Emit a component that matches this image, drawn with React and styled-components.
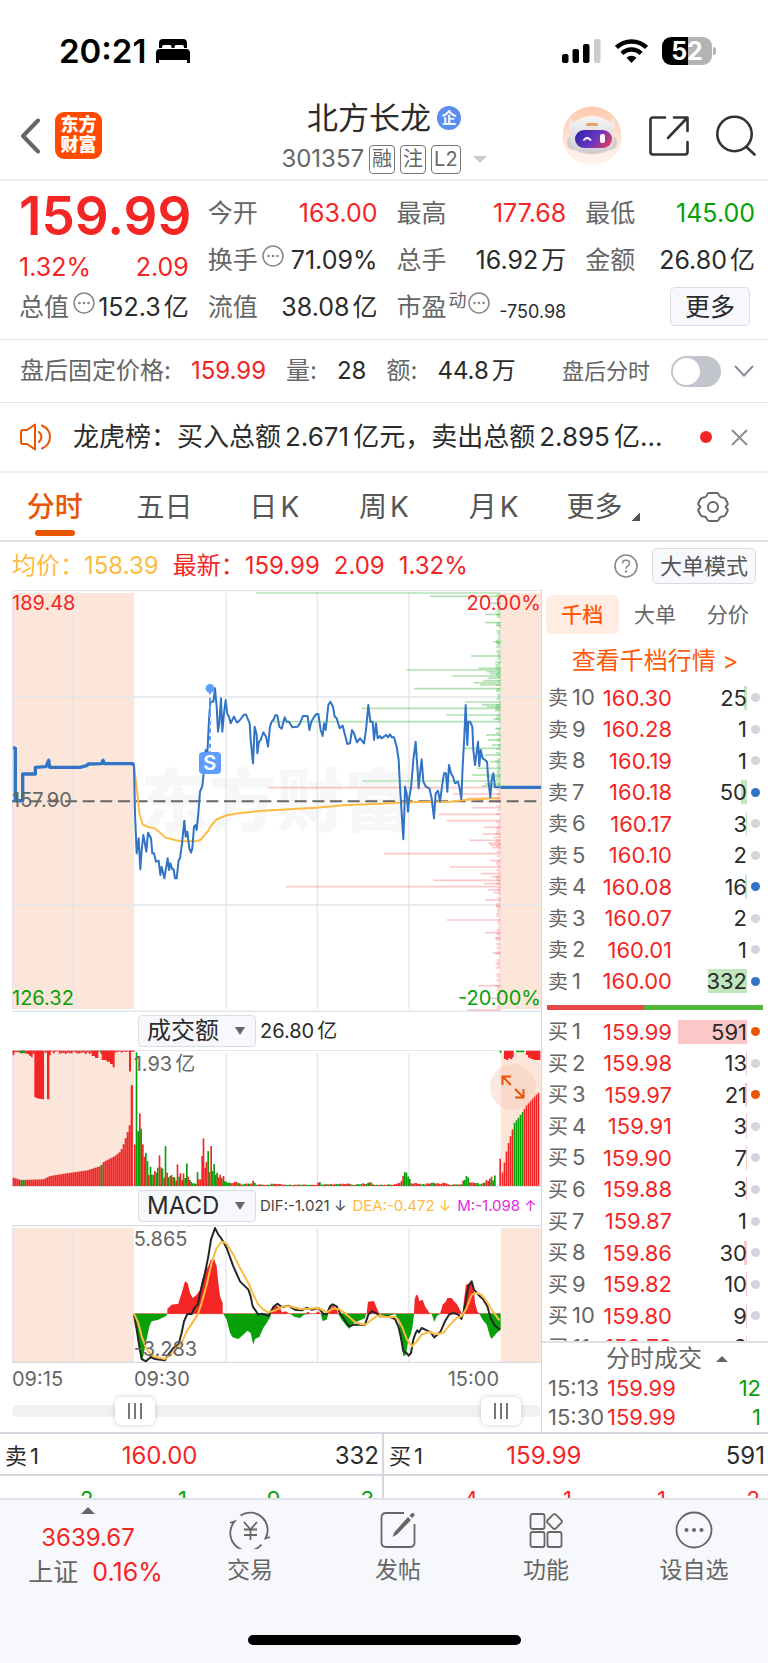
import React from "react"
import styled, { createGlobalStyle } from "styled-components"

const RED = "#f42525"
const GREEN = "#08a008"
const ORANGE = "#ea5504"
const BLUE = "#3173c4"
const LINE = "#e3e5ea"
const PEACH = "#fce6da"

const GlobalStyle = createGlobalStyle`
  * {
    box-sizing: border-box;
  }

  body {
    margin: 0;
    background: white;
    color: #2b2b2b;
    font-family: Inter, "Noto Sans CJK SC", sans-serif;
    font-size: 24px;
    line-height: 32px;
  }

  button,
  select,
  input {
    font: inherit;
    color: inherit;
    margin: 0;
  }

  button {
    padding: 0;
    border: 0;
    background: none;
    cursor: pointer;
  }

  a {
    color: inherit;
    text-decoration: none;
  }

  h1,
  p,
  dl,
  dd {
    margin: 0;
  }

  svg {
    display: block;
  }
`

/* ---------- data ---------- */

const sells = [
  ["卖10", "160.30", 25, 3, "idle"],
  ["卖9", "160.28", 1, 0, "idle"],
  ["卖8", "160.19", 1, 0, "idle"],
  ["卖7", "160.18", 50, 6, "sell"],
  ["卖6", "160.17", 3, 1, "idle"],
  ["卖5", "160.10", 2, 0, "idle"],
  ["卖4", "160.08", 16, 2, "sell"],
  ["卖3", "160.07", 2, 0, "idle"],
  ["卖2", "160.01", 1, 0, "idle"],
  ["卖1", "160.00", 332, 39, "sell"],
]

const buys = [
  ["买1", "159.99", 591, 69, "buy"],
  ["买2", "159.98", 13, 1, "idle"],
  ["买3", "159.97", 21, 2, "buy"],
  ["买4", "159.91", 3, 1, "idle"],
  ["买5", "159.90", 7, 1, "idle"],
  ["买6", "159.88", 3, 1, "idle"],
  ["买7", "159.87", 1, 0, "idle"],
  ["买8", "159.86", 30, 3, "idle"],
  ["买9", "159.82", 10, 1, "idle"],
  ["买10", "159.80", 9, 1, "idle"],
  ["买11", "159.78", 8, 1, "idle"],
]

// afternoon series are stored relative to this x
const NOON = 1140
const late = text =>
  text
    .split(" ")
    .map(pair => {
      const [x, y] = pair.split(",")
      return `${Number(x) + NOON},${y}`
    })
    .join(" ")

const preOpen =
  "39,503 46,505 46,662 68,662 68,582 106,582 106,562 138,560 146,541 149,562 240,562 262,556 264,552 305,551 309,541 313,551 398,551 402,556"

const price =
  "402,556 405,700 410,820 416,775 421,868 425,810 430,765 439,815 444,758 453,775 457,820 462,820 468,845 476,842 481,885 485,860 493,895 503,835 507,870 511,850 517,868 521,868 525,895 530,895 536,840 540,835 546,790 553,722 557,770 562,755 568,805 573,818 577,805 582,740 587,735 590,750 595,700 600,635 607,618 612,570 617,510 622,520 627,420 631,365 640,365 645,325 650,380 654,455 658,430 663,355 667,455 672,400 677,360 682,402 687,410 692,430 702,410 711,428 720,420 732,404 738,404 749,430 752,480 759,550 764,440 770,465 772,520 777,485 782,480 790,457 798,470 804,500 810,440 815,425 820,420 826,406 832,406 838,440 845,446 854,412 860,425 867,425 877,442 893,440 900,430 909,408 923,408 928,450 934,425 944,408 950,402 955,402 962,450 968,468 972,430 977,450 985,375 991,365 999,380 1004,410 1010,415 1019,445 1028,437 1042,492 1050,490 1056,450 1062,460 1071,487 1080,475 1092,490 1098,450 1105,375 1111,425 1118,425 1122,480 1128,430 1133,475 1140,468 " +
  late(
    "5,475 18,465 24,472 30,463 36,472 42,472 50,500 56,540 60,620 65,700 70,778 73,700 75,620 80,640 84,695 88,650 93,625 100,540 107,485 112,560 116,625 120,580 125,538 130,605 138,620 148,625 155,655 162,715 167,640 174,632 180,665 186,620 192,580 198,580 202,635 207,555 213,580 219,590 225,610 234,605 240,630 244,657 248,560 253,470 257,375 262,495 265,425 270,425 277,440 280,510 285,555 294,485 298,558 302,510 308,535 315,540 321,545 325,600 331,652 335,600 340,580 345,622 362,622"
  )

const average =
  "402,556 412,640 418,700 428,733 440,740 465,745 480,758 497,773 540,784 590,783 601,780 625,752 632,738 650,718 680,706 720,699 780,693 880,687 950,683 1030,676 1140,671 1215,667 1350,665 1395,660 1495,654"

// [y, left end] of each price level in the order depth
const askDepth = [
  [39, -372], [49, 150], [70, 330], [103, 315], [128, 315], [137, 350],
  [185, 340], [189, 350], [228, 273], [247, 345], [265, 295], [270, 80],
  [275, 320], [281, 330], [288, 217], [294, 325], [302, 310], [308, 282],
  [314, 300], [326, 102], [366, 255], [374, 305], [380, 320], [385, -55],
  [392, 345], [405, 198], [417, 340], [425, -325], [445, 345], [465, 318],
  [480, 325], [495, 335], [505, 252], [525, 315], [545, 330], [565, 290],
  [585, 275], [590, 320], [603, -55], [612, 315], [618, 305],
]

const bidDepth = [
  [623, -335], [642, 220], [655, 260], [665, 320], [683, 275], [703, 175],
  [722, 200], [742, 312], [762, 308], [772, 340], [781, 268], [790, 325],
  [795, 330], [803, 335], [821, 13], [842, 330], [861, 210], [881, 302],
  [890, 335], [901, 160], [911, 312], [920, -282], [930, 325], [938, 340],
  [960, 315], [980, 348], [1020, 200], [1058, 315], [1075, 345],
  [1119, 338], [1217, 295], [1255, 330], [1290, 262],
]

// [x, height, is it a rising bar]
const openVolume = [
  [404, 125, 1], [409, 402, 0], [414, 165, 0], [419, 218, 1], [423, 172, 0],
  [428, 125, 1], [433, 88, 1], [437, 100, 0], [442, 75, 0], [446, 33, 1],
  [451, 58, 0], [455, 34, 0], [460, 34, 0], [464, 45, 1], [469, 40, 0],
  [473, 55, 0], [478, 92, 1], [483, 56, 1], [487, 52, 0], [492, 25, 1],
  [496, 120, 0], [501, 40, 1], [505, 26, 0], [510, 30, 1], [514, 33, 0],
  [519, 27, 1], [523, 26, 0], [528, 16, 1], [532, 65, 1], [537, 28, 0],
  [541, 38, 1], [546, 18, 1], [550, 38, 1], [555, 24, 0], [560, 68, 0],
  [564, 28, 1], [569, 18, 0], [573, 12, 1], [578, 8, 0], [583, 8, 0],
  [587, 6, 1], [592, 42, 0], [596, 20, 1], [601, 20, 1], [606, 90, 1],
  [610, 143, 1], [615, 55, 1], [619, 72, 1], [624, 105, 0], [628, 42, 1],
  [633, 120, 1], [637, 45, 0], [642, 66, 0], [647, 34, 1], [651, 40, 0],
  [656, 26, 1], [660, 34, 1], [665, 24, 0], [670, 30, 1], [674, 14, 0],
]

const quietVolume = [
  [680, 15], [695, 12], [712, 15], [722, 5], [752, 8], [760, 24], [768, 7],
  [795, 4], [833, 9], [850, 4], [950, 4], [956, 15], [966, 5], [1050, 9],
  [1060, 4], [1112, 11], [1122, 4], [1180, 5], [1192, 11],
]

const lateVolume = [
  [62, 14], [68, 34], [77, 50], [87, 24], [93, 10], [130, 6], [165, 12],
  [178, 6], [190, 13], [205, 5], [245, 5], [254, 28], [262, 36], [270, 16],
  [290, 9], [305, 6], [322, 20], [333, 40], [340, 22], [347, 44], [349, 0],
].map(([x, h]) => [x + NOON, h])

const volumeCurve = quietVolume.concat(lateVolume)

const preVolume = [
  [38, 26], [62, 18], [130, 20], [150, 30], [200, 38], [262, 47], [302, 60],
  [312, 73], [345, 90], [362, 104], [372, 128], [384, 165], [391, 190],
  [395, 300],
]

const postVolume = [
  [367, 36], [375, 75], [382, 115], [392, 150], [404, 190], [418, 208],
  [430, 225], [440, 243], [455, 260], [470, 275], [482, 286],
].map(([x, h]) => [x + NOON, h])

const valueAt = (curve, x) => {
  const next = curve.findIndex(([cx]) => cx >= x)
  if (next <= 0) return curve[next === 0 ? 0 : curve.length - 1][1]
  const [x0, h0] = curve[next - 1]
  const [x1, h1] = curve[next]
  return h0 + ((h1 - h0) * (x - x0)) / (x1 - x0)
}

const range = (from, to, step) => {
  const list = []
  for (let x = from; x <= to; x += step) list.push(x)
  return list
}

const noise = n => Math.abs(Math.sin(n * 12.9898) * 43758.5453) % 1

const macdUp = [
  "502,942 502,928 515,915 535,912 545,880 555,845 563,850 570,880 578,895 590,885 600,870 605,845 615,815 625,800 632,780 642,778 650,800 655,850 660,890 668,910 668,942",
  "812,942 820,925 830,918 840,925 846,938 858,935 868,942",
  "915,942 924,936 932,942",
  "945,942 955,935 962,942",
  "985,942 990,925 1000,918 1010,928 1014,942",
  "1100,942 1104,906 1122,904 1128,920 1138,942",
  late("102,942 104,900 108,885 114,888 118,905 128,900 135,920 150,942"),
  late(
    "180,942 188,915 198,905 202,895 215,895 222,905 230,912 240,930 245,942"
  ),
  late("248,942 252,900 258,855 270,850 280,855 285,910 292,935 298,942"),
]

const macdDown = [
  "402,942 410,980 417,1040 423,1080 430,1070 437,1030 442,1010 448,980 455,965 475,960 500,948 500,942",
  "670,942 680,960 690,1000 698,1013 715,1018 730,1005 742,993 752,1000 760,1035 765,1018 778,1012 790,985 800,970 812,950 812,942",
  "870,942 885,952 900,955 912,945 930,942",
  "962,942 968,964 980,960 985,942",
  "1014,942 1025,960 1040,980 1048,987 1062,970 1095,955 1098,942",
  "1138,942 1150,948 1170,948 1186,942",
  late(
    "46,942 55,965 62,1000 70,1070 78,1065 85,1020 92,1005 98,980 102,942"
  ),
  late("155,942 163,966 170,950 180,942"),
  late("298,942 308,960 320,975 330,1010 335,1018 350,1000 362,990 362,942"),
]

const dif =
  "402,945 410,990 418,1040 425,1078 438,1085 452,1072 465,1078 494,1082 505,1065 520,1045 535,1035 545,1000 552,965 562,943 575,943 583,925 593,915 603,870 615,820 625,770 633,720 645,685 655,705 663,715 672,730 680,745 700,800 720,845 745,870 752,890 758,920 775,945 785,942 806,948 820,922 832,912 845,922 865,918 885,930 905,932 920,925 935,930 955,925 970,942 980,944 990,920 998,914 1010,920 1020,940 1040,970 1048,980 1062,975 1095,975 1105,945 1115,935 1128,940 1139,948 " +
  late(
    "0,950 25,950 45,958 55,980 62,1010 70,1055 78,1058 86,1068 93,1060 100,1020 107,1000 112,992 117,998 125,985 140,992 152,998 163,1013 172,1005 182,995 195,965 207,945 220,940 235,945 244,958 250,940 258,900 265,860 275,845 282,870 300,890 310,900 322,920 332,955 345,978 360,990"
  )

const dea =
  "402,942 415,970 425,1010 440,1050 460,1070 494,1078 510,1068 530,1045 545,1030 560,995 580,965 593,945 605,910 620,855 635,790 650,745 665,726 680,732 700,765 720,805 745,850 760,885 775,915 790,930 806,938 825,932 850,920 870,920 900,928 930,927 955,925 980,938 1000,926 1020,930 1040,945 1065,967 1085,974 1098,974 1115,960 1130,950 1139,947 " +
  late(
    "0,948 20,952 45,952 55,960 68,985 80,1018 95,1040 108,1028 125,1005 145,997 170,1003 190,1000 210,975 230,955 245,950 260,925 275,885 290,880 305,885 320,905 335,930 358,962"
  )

/* ---------- status bar and header ---------- */

const Screen = styled.div`
  min-width: 600px;
`

// small space between digits and a Chinese character
const Spaced = styled.span`
  margin-left: 3px;
`

const StatusBar = styled.div`
  height: 92px;
  padding: 10px 52px 0 59px;
  display: flex;
  align-items: center;
  justify-content: space-between;
  color: black;
`

const Cluster = styled.div`
  display: flex;
  align-items: center;
  gap: ${p => p.$gap}px;
`

const Clock = styled.span`
  font-size: 33px;
  font-weight: 600;
`

const Battery = styled.span`
  display: flex;
  align-items: center;

  span {
    width: 50px;
    height: 28px;
    border-radius: 9px;
    background: linear-gradient(to right, black 52%, #b3b3b3 52%);
    color: white;
    font-size: 25px;
    font-weight: 700;
    line-height: 28px;
    text-align: center;
  }

  &::after {
    content: "";
    width: 3px;
    height: 8px;
    margin-left: 1px;
    border-radius: 0 3px 3px 0;
    background: #b3b3b3;
  }
`

const Header = styled.header`
  height: 89px;
  padding: 0 12px;
  display: grid;
  grid-template-columns: 1fr auto 1fr;
  align-items: center;
  border-bottom: 2px solid #eeeeee;
`

const HeaderLeft = styled(Cluster)`
  padding-left: 8px;
`

const HeaderTitle = styled.div`
  padding-top: 5px;
`

const HeaderActions = styled.div`
  display: flex;
  align-items: center;
  justify-content: flex-end;
  gap: 27px;
`

const AppLogo = styled.a`
  width: 47px;
  height: 47px;
  padding-top: 3px;
  border-radius: 9px;
  background: #ff4a00;
  color: white;
  font-size: 18px;
  font-weight: 900;
  line-height: 20px;
  text-align: center;
`

const Title = styled.h1`
  display: flex;
  align-items: center;
  justify-content: center;
  gap: 6px;
  font-size: 31px;
  font-weight: 400;
  line-height: 42px;
`

const Badge = styled.span`
  width: 24px;
  height: 24px;
  border-radius: 50%;
  background: #5b8def;
  color: white;
  font-size: 15px;
  font-weight: 700;
  line-height: 24px;
  text-align: center;
`

const Code = styled.div`
  display: flex;
  align-items: center;
  justify-content: center;
  gap: 5px;
  height: 40px;
  color: #666666;
  font-size: 24px;
`

const Tag = styled.span`
  height: 29px;
  padding: 0 2px;
  border: 1px solid #777777;
  border-radius: 4px;
  font-size: 20px;
  line-height: 27px;
`

const Caret = styled.span`
  width: 0;
  height: 0;
  margin-left: ${p => p.$space || 0}px;
  border: ${p => p.$size || 7}px solid transparent;
  ${p =>
    p.$up
      ? `border-top: 0; border-bottom-color: ${p.$color || "#666666"};`
      : `border-bottom: 0; border-top-color: ${p.$color || "#666666"};`}
`

/* ---------- quote ---------- */

const Quote = styled.section`
  display: grid;
  grid-template-columns: repeat(4, minmax(0, 1fr));
  column-gap: 19px;
  height: 159px;
  padding: 8px 13px 0 19px;
  border-bottom: 1px solid #e8e8e8;
`

const QuoteList = styled.dl`
  display: flex;
  flex-direction: column;
`

const QuoteRow = styled.div`
  display: flex;
  align-items: center;
  justify-content: space-between;
  height: 47px;
  white-space: nowrap;

  dt {
    display: flex;
    align-items: center;
    color: #666666;
    font-size: 25px;
  }

  dd {
    color: ${p => p.$color || "#2b2b2b"};
    font-size: ${p => (p.$small ? 18 : 25)}px;
    padding-top: ${p => (p.$small ? 10 : 0)}px;
  }

  svg {
    margin: 0 0 8px 4px;
  }

  sup {
    font-size: 18px;
    line-height: 24px;
    padding: 0 0 12px 2px;
  }

  sup + svg {
    margin-left: 1px;
  }
`

const LastPrice = styled.p`
  height: 55px;
  color: ${RED};
  font-size: 53px;
  font-weight: 600;
  line-height: 55px;
`

const Change = styled.p`
  display: flex;
  align-items: center;
  justify-content: space-between;
  height: 39px;
  padding-top: 6px;
  color: ${RED};
  font-size: 25px;
`

const OutlineButton = styled.button`
  height: ${p => p.$height}px;
  padding: 0 ${p => p.$pad}px;
  border: 1px solid #d9dce3;
  border-radius: 5px;
  background: #f7f8fb;
  color: ${p => p.$color || "#2b2b2b"};
  font-size: ${p => p.$size}px;
  line-height: 32px;
  white-space: nowrap;
`

const MoreRow = styled.div`
  display: flex;
  justify-content: flex-end;
  align-items: center;
  height: 47px;
  padding-right: 5px;
`

const AfterHours = styled.section`
  display: flex;
  align-items: center;
  height: 63px;
  padding: 0 14px 0 20px;
  border-bottom: 1px solid #e3e3e3;
  color: #666666;
  white-space: nowrap;
`

const Figure = styled.span`
  margin: 0 ${p => (p.$last ? 0 : 20)}px 0 20px;
  color: ${p => p.$color || "#2b2b2b"};
`

const SwitchLabel = styled.label`
  display: flex;
  align-items: center;
  gap: 21px;
  margin: 0 13px 0 auto;
  font-size: 22px;
`

const Switch = styled.input`
  appearance: none;
  width: 50px;
  height: 31px;
  border-radius: 16px;
  background: #c2c5cb;

  &::before {
    content: "";
    display: block;
    width: 27px;
    height: 27px;
    margin: 2px;
    border-radius: 50%;
    background: white;
  }

  &:checked {
    background: ${ORANGE};
  }

  &:checked::before {
    margin-left: 21px;
  }
`

const News = styled.section`
  display: flex;
  align-items: center;
  height: 70px;
  padding: 0 20px;
  border-bottom: 2px solid #eeeeee;
`

const NewsText = styled.a`
  flex: 1;
  min-width: 0;
  margin: 0 32px 0 21px;
  overflow: hidden;
  font-size: 26px;
  white-space: nowrap;

  span {
    margin: 0 4px;
  }
`

const RedDot = styled.span`
  width: 12px;
  height: 12px;
  margin-right: 19px;
  border-radius: 50%;
  background: ${RED};
`

/* ---------- chart tabs ---------- */

const Tabs = styled.nav`
  display: grid;
  grid-template-columns: repeat(7, 1fr);
  height: 69px;
  border-bottom: 2px solid #dfe1e7;
`

const Tab = styled.button`
  display: flex;
  align-items: center;
  justify-content: center;
  position: relative;
  color: ${p => (p.$active ? ORANGE : "#555555")};
  font-size: 28px;
  font-weight: ${p => (p.$active ? 500 : 400)};

  &::after {
    content: "";
    display: ${p => (p.$active ? "block" : "none")};
    position: absolute;
    bottom: 4px;
    width: 40px;
    height: 6px;
    border-radius: 3px;
    background: ${ORANGE};
  }
`

const Corner = styled.span`
  width: 8px;
  height: 8px;
  margin: 20px 0 0 10px;
  background: linear-gradient(135deg, transparent 50%, #555555 50%);
`

const Summary = styled.div`
  display: flex;
  align-items: center;
  gap: 14px;
  height: 48px;
  padding: 0 12px;
  color: ${RED};
  white-space: nowrap;

  svg {
    margin-left: auto;
  }
`

const Average = styled.span`
  color: #fdbb42;
`

const Workspace = styled.main`
  display: grid;
  grid-template-columns: minmax(0, 1fr) 226px;
  padding-left: 12px;
`

const Charts = styled.section`
  border-right: 1px solid #d5d8e0;
`

const Panel = styled.div`
  position: relative;
  height: ${p => p.$height}px;

  > svg {
    position: relative;
    width: 100%;
    height: 100%;
  }
`

const Watermark = styled.span`
  position: absolute;
  top: 50%;
  left: 50%;
  transform: translate(-50%, -50%);
  color: #f7f7f8;
  font-size: 68px;
  font-weight: 900;
  line-height: 72px;
  white-space: nowrap;
`

const AxisLabel = styled.span`
  position: absolute;
  top: ${p => p.$top};
  bottom: ${p => p.$bottom};
  left: ${p => p.$left};
  right: ${p => p.$right};
  color: ${p => p.$color || "#666666"};
  font-size: 20px;
  line-height: 24px;
`

const SellMark = styled.span`
  position: absolute;
  top: 162px;
  left: calc(37% - 9px);
  width: 22px;
  height: 22px;
  border-radius: 4px;
  background: #5e9dff;
  color: white;
  font-size: 20px;
  font-weight: 600;
  line-height: 22px;
  text-align: center;
`

const ExpandButton = styled.button`
  position: absolute;
  top: 14px;
  right: 5px;
  display: flex;
  align-items: center;
  justify-content: center;
  width: 46px;
  height: 46px;
  border-radius: 50%;
  background: rgba(247, 205, 182, 0.45);
`

const IndicatorBar = styled.div`
  display: flex;
  align-items: center;
  gap: 4px;
  height: 38px;
  padding-left: 126px;
  font-size: 20px;
  white-space: nowrap;
`

const SelectBox = styled.label`
  display: grid;
  align-items: center;

  &::after {
    content: "";
    grid-area: 1 / 1;
    justify-self: end;
    margin-right: 11px;
    border: 5px solid transparent;
    border-top: 8px solid #666666;
    border-bottom: 0;
    pointer-events: none;
  }
`

const Select = styled.select`
  grid-area: 1 / 1;
  appearance: none;
  width: 118px;
  height: 32px;
  padding: 0 8px;
  border: 1px solid #d9dce3;
  border-radius: 4px;
  background: #f7f8fb;
  font-size: 24px;
  line-height: 28px;
`

const Reading = styled.span`
  margin-right: 2px;
  color: ${p => p.$color};
  font-size: 15px;
`

const TimeAxis = styled.div`
  display: grid;
  grid-template-columns: 122px 1fr auto;
  height: 32px;
  padding-right: 42px;
  color: #666666;
  font-size: 20px;
`

const RangeBar = styled.div`
  display: grid;
  align-items: center;
  height: 32px;

  &::before {
    content: "";
    grid-area: 1 / 1;
    height: 12px;
    border-radius: 6px;
    background: #f1f1f4;
  }
`

const RangeInput = styled.input`
  grid-area: 1 / 1;
  appearance: none;
  width: 100%;
  height: 28px;
  background: transparent;
  pointer-events: none;

  &::-webkit-slider-thumb {
    appearance: none;
    width: 40px;
    height: 28px;
    border-radius: 6px;
    background: repeating-linear-gradient(
          to right,
          #777777 0 2px,
          transparent 2px 6px
        )
        center / 14px 16px no-repeat,
      white;
    box-shadow: 0 0 5px rgba(0, 0, 0, 0.2);
    pointer-events: auto;
  }
`

/* ---------- order book ---------- */

const Book = styled.aside`
  display: flex;
  flex-direction: column;
`

const BookTabs = styled.div`
  display: grid;
  grid-template-columns: repeat(3, 1fr);
  height: 49px;
  padding: 5px 4px;
`

const BookTab = styled.button`
  border-radius: 6px;
  background: ${p => (p.$active ? "#ffece2" : "none")};
  color: ${p => (p.$active ? "#ff5a0a" : "#666666")};
  font-size: 21px;
  font-weight: ${p => (p.$active ? 500 : 400)};
`

const DepthLink = styled.a`
  height: 43px;
  padding-top: 6px;
  color: #ff5a0a;
  text-align: center;
`

const BookTable = styled.table`
  display: block;
  height: ${p => p.$height}px;
  overflow: hidden;

  tbody {
    display: grid;
    grid-auto-rows: 1fr;
    height: ${p => p.$rows}px;
  }
`

const BookRow = styled.tr`
  display: grid;
  grid-template-columns: 52px 72px 1fr 9px;
  align-items: center;
  padding: 0 8px 0 6px;
  font-size: 22px;

  th,
  td {
    padding: 0;
    font-weight: 400;
    text-align: right;
    line-height: 24px;
    white-space: nowrap;
  }

  th {
    color: #666666;
    font-size: 20px;
    text-align: left;
  }

  th span {
    margin-left: 4px;
    font-size: 22px;
  }
`

const PriceCell = styled.td`
  color: ${RED};
`

const SizeCell = styled.td`
  margin-right: 4px;
  background: linear-gradient(
      ${p => (p.$buy ? "#fbc8c8, #fbc8c8" : "#bfe6bf, #bfe6bf")}
    )
    right / ${p => p.$bar}px 100% no-repeat;
`

const Dot = styled.td`
  width: 9px;
  height: 9px;
  border-radius: 50%;
  background: ${p =>
    ({ idle: "#d2d5dc", sell: BLUE, buy: ORANGE }[p.$kind])};
`

const Balance = styled.div`
  height: 5px;
  margin: 8px 5px 6px;
  background: linear-gradient(
    110deg,
    #e64848 45%,
    #52b73c 45%
  );
`

const Trades = styled.table`
  display: block;
  margin-top: auto;
  border-top: 2px solid #dfe1e7;
  font-size: 22px;

  caption {
    display: flex;
    align-items: center;
    justify-content: center;
    gap: 14px;
    height: 31px;
    padding-left: 24px;
    color: #666666;
    font-size: 24px;
  }

  tbody {
    display: block;
  }

  tr {
    display: grid;
    grid-template-columns: 59px 1fr auto;
    height: 29px;
    padding: 0 7px 0 6px;
    line-height: 29px;
    white-space: nowrap;
  }

  td {
    padding: 0;
    color: ${RED};
  }

  td:first-child {
    color: #666666;
  }

  td:last-child {
    color: ${GREEN};
  }
`

/* ---------- bottom ---------- */

const BestQuotes = styled.div`
  display: grid;
  grid-template-columns: 1fr 1fr;
  border-top: 2px solid #d5d8e0;
`

const Side = styled.div`
  border-right: ${p => (p.$last ? 0 : 2)}px solid #d5d8e0;
`

const BestRow = styled.div`
  display: grid;
  grid-template-columns: 1fr 1fr 1fr;
  align-items: center;
  height: 42px;
  padding: 4px 3px 0 5px;
  border-bottom: 2px solid #d5d8e0;

  > :nth-child(1) {
    font-size: 22px;
  }

  > :nth-child(2) {
    margin-left: -8px;
    color: ${RED};
  }

  > :nth-child(3) {
    text-align: right;
  }
`

const QueueRow = styled.div`
  display: grid;
  grid-template-columns: repeat(4, 1fr);
  height: 22px;
  padding: 10px 8px 0 0;
  overflow: hidden;
  color: ${p => p.$color};
  font-size: 22px;
  line-height: 26px;
  text-align: right;
`

const BottomNav = styled.nav`
  display: grid;
  grid-template-columns: 176px repeat(4, 1fr);
  height: 137px;
  border-top: 2px solid #dfe1e7;
  background: #f7f8fb;
`

const NavItem = styled.a`
  display: flex;
  flex-direction: column;
  align-items: center;
  padding-top: 11px;
  gap: 5px;
  color: #666666;
  font-size: 23px;
`

const IndexItem = styled.a`
  display: flex;
  flex-direction: column;
  align-items: center;
  padding-top: 7px;
  color: ${RED};
  gap: 2px;

  strong {
    margin-top: 6px;
    font-weight: 400;
  }
`

const IndexChange = styled.span`
  display: flex;
  gap: 14px;
  padding-left: 15px;
  font-size: 25px;
`

const IndexName = styled.span`
  color: #666666;
`

const HomeArea = styled.div`
  height: 28px;
  background: #f7f8fb;

  &::before {
    content: "";
    display: block;
    width: 273px;
    height: 10px;
    margin: 0 auto;
    border-radius: 5px;
    background: black;
  }
`

/* ---------- icons ---------- */

const BedIcon = () => (
  <svg width="34" height="24" viewBox="0 0 34 24">
    <path d="M3 9V4q0-4 4-4h20q4 0 4 4v5h-3V8q0-2-2-2h-6q-1.500 0-1.500 2V9h-3V8q0-2-1.500-2H8Q6 6 6 8v1zM0 24V14q0-4 4-4h26q4 0 4 4v10h-3v-3H3v3z" />
  </svg>
)

const SignalIcon = () => (
  <svg width="39" height="24" viewBox="0 0 39 24">
    <rect y="15" width="6.500" height="9" rx="2" />
    <rect x="10.500" y="10" width="6.500" height="14" rx="2" />
    <rect x="21" y="5" width="6.500" height="19" rx="2" />
    <rect x="32" width="6.500" height="24" rx="2" fill="#cccccc" />
  </svg>
)

const WifiIcon = () => (
  <svg width="33" height="24" viewBox="0 0 33 24">
    <g fill="none" stroke="black" strokeWidth="4.500">
      <path d="M1.500 8.500a21.500 21.500 0 0 1 30 0" />
      <path d="M7 14.500a13.500 13.500 0 0 1 19 0" />
    </g>
    <path d="M16.500 24l-5-5.200a7.200 7.200 0 0 1 10 0z" />
  </svg>
)

const BackIcon = () => (
  <svg width="20" height="36" viewBox="0 0 20 36">
    <path
      d="M18 2.500L3 18l15 15.500"
      fill="none"
      stroke="#666666"
      strokeWidth="4"
      strokeLinecap="round"
      strokeLinejoin="round"
    />
  </svg>
)

const RobotIcon = () => (
  <svg width="60" height="60" viewBox="0 0 60 60">
    <defs>
      <linearGradient id="halo" x2="0" y2="1">
        <stop offset="0" stopColor="#ffc9ac" />
        <stop offset="1" stopColor="#fff7f2" />
      </linearGradient>
      <linearGradient id="visor" y1="0.300" y2="0.700">
        <stop offset="0" stopColor="#3327a5" />
        <stop offset="0.550" stopColor="#6c35c4" />
        <stop offset="1" stopColor="#e23a5e" />
      </linearGradient>
      <linearGradient id="shell" x2="0" y2="1">
        <stop offset="0" stopColor="#f7f5f5" />
        <stop offset="1" stopColor="#cfcbd0" />
      </linearGradient>
    </defs>
    <circle cx="30" cy="30" r="29.500" fill="url(#halo)" />
    <path
      d="M8 11q-2 8 1 14L20 15Q11 18 8 11zM52 11q2 8-1 14L40 15q9 3 12-4z"
      fill="#efe9e8"
    />
    <rect x="5" y="29" width="50" height="15" rx="7" fill="#d0cbcf" />
    <path
      d="M30 10q19 0 22 18 2 13-7 17-6 3-15 3t-15-3q-9-4-7-17Q11 10 30 10z"
      fill="url(#shell)"
    />
    <rect x="24" y="17" width="12" height="3" rx="1.500" fill="#e9a267" />
    <rect x="13" y="24" width="37" height="18" rx="9" fill="url(#visor)" />
    <path
      d="M22 34q3-4 6.500 0"
      fill="none"
      stroke="white"
      strokeWidth="1.800"
      strokeLinecap="round"
    />
    <rect x="38" y="28" width="5" height="9" rx="2" fill="white" />
  </svg>
)

const ShareIcon = () => (
  <svg width="40" height="40" viewBox="0 0 40 40">
    <g
      fill="none"
      stroke="#333333"
      strokeWidth="2.600"
      strokeLinecap="round"
      strokeLinejoin="round"
    >
      <path d="M16 1.500H4Q1.500 1.500 1.500 4v32q0 2.500 2.500 2.500h32q2.500 0 2.500-2.500V26" />
      <path d="M25 1.500h13.500V15M38 2L19 22" />
    </g>
  </svg>
)

const SearchIcon = () => (
  <svg width="40" height="41" viewBox="0 0 40 41">
    <g fill="none" stroke="#333333" strokeWidth="2.600" strokeLinecap="round">
      <circle cx="18.500" cy="19" r="17.200" />
      <path d="M30.500 32l8 7.500" />
    </g>
  </svg>
)

const MoreDots = () => (
  <svg width="22" height="22" viewBox="0 0 22 22" fill="#888888">
    <circle cx="11" cy="11" r="10" fill="none" stroke="#888888" strokeWidth="1.500" />
    <circle cx="6.500" cy="11" r="1.300" />
    <circle cx="11" cy="11" r="1.300" />
    <circle cx="15.500" cy="11" r="1.300" />
  </svg>
)

const ChevronIcon = () => (
  <svg width="20" height="12" viewBox="0 0 20 12">
    <path d="M1 1l9 9.500L19 1" fill="none" stroke="#8a8d94" strokeWidth="2" />
  </svg>
)

const SpeakerIcon = () => (
  <svg width="32" height="28" viewBox="0 0 32 28">
    <g fill="none" stroke={ORANGE} strokeWidth="2" strokeLinejoin="round">
      <path d="M15 1.500v25l-8-5.500H3q-2 0-2-2V9q0-2 2-2h4z" />
      <path d="M19 9q5 5 0 10" strokeLinecap="round" />
      <path d="M22 2.500q8 3.500 8 11.500t-8 11.500" strokeLinecap="round" />
    </g>
  </svg>
)

const CloseIcon = () => (
  <svg width="17" height="17" viewBox="0 0 17 17">
    <path d="M1 1l15 15M16 1L1 16" stroke="#8a8d94" strokeWidth="2" />
  </svg>
)

const GearIcon = () => (
  <svg width="32" height="32" viewBox="0 0 32 32">
    <g fill="none" stroke="#666666" strokeWidth="2" strokeLinejoin="round">
      <path d="M12 2h8q1.500 0 2 2 1 2.500 3.500 2.500 2 0 3 1.500l2 4q.7 1.500-.8 2.700-2 1.300 0 2.600 1.500 1.200.8 2.700l-2 4q-1 1.500-3 1.500-2.500 0-3.500 2.500-.5 2-2 2h-8q-1.500 0-2-2-1-2.500-3.500-2.500-2 0-3-1.500l-2-4q-.7-1.500.8-2.700 2-1.300 0-2.600Q.8 13.500 1.500 12l2-4q1-1.500 3-1.500Q9 6.500 10 4q.5-2 2-2z" />
      <circle cx="16" cy="16" r="5" />
    </g>
  </svg>
)

const HelpIcon = () => (
  <svg width="24" height="24" viewBox="0 0 24 24">
    <g fill="none" stroke="#8a8a8a" strokeWidth="1.600">
      <circle cx="12" cy="12" r="11" />
      <path d="M8.500 9.500q0-3.300 3.500-3.300t3.500 3q0 1.800-1.800 2.900T12 14.800" />
    </g>
    <circle cx="12" cy="17.500" r="1.200" fill="#8a8a8a" />
  </svg>
)

const ExpandIcon = () => (
  <svg width="24" height="24" viewBox="0 0 24 24">
    <path
      d="M1.500 10V1.500H10M2 2l8 8M22.500 14v8.500H14M22 22l-8-8"
      fill="none"
      stroke={ORANGE}
      strokeWidth="2"
    />
  </svg>
)

const TradeIcon = () => (
  <svg width="42" height="38" viewBox="0 0 42 38">
    <g fill="none" stroke="#666666" strokeWidth="1.800">
      <path d="M11.500 4.500A17.500 17.500 0 0 1 36.500 27.500l4.500-1.500" />
      <path d="M32.500 33.500A17.500 17.500 0 0 1 5.500 10.500L1 12" />
      <path d="M15 11l6.500 7.500L28 11M21.500 18.500V29M15 18.500h13M15 24h13" />
    </g>
  </svg>
)

const PostIcon = () => (
  <svg width="36" height="38" viewBox="0 0 36 38">
    <path
      d="M24 2H6Q1.500 2 1.500 6.500v25Q1.500 36 6 36h24q4.500 0 4.500-4.500V13"
      fill="none"
      stroke="#666666"
      strokeWidth="1.800"
    />
    <path
      d="M28 6l3 3-14 14.500-4.500 2.500 2-5zM29.500 4.500L32 2q3-.5 2.500 2.500L32 7z"
      fill="#666666"
    />
  </svg>
)

const GridIcon = () => (
  <svg width="34" height="38" viewBox="0 0 34 38">
    <g fill="none" stroke="#666666" strokeWidth="1.800">
      <rect x="1.500" y="3" width="14" height="15" rx="2" />
      <rect x="1.500" y="21" width="14" height="15" rx="2" />
      <rect x="18.500" y="21" width="14" height="15" rx="2" />
      <rect x="19.700" y="4.700" width="11.600" height="11.600" rx="2" transform="rotate(45 25.500 10.500)" />
    </g>
  </svg>
)

const WatchIcon = () => (
  <svg width="38" height="38" viewBox="0 0 38 38" fill="#666666">
    <circle cx="19" cy="19" r="17.500" fill="none" stroke="#666666" strokeWidth="1.800" />
    <circle cx="11.500" cy="19" r="2" />
    <circle cx="19" cy="19" r="2" />
    <circle cx="26.500" cy="19" r="2" />
  </svg>
)

/* ---------- charts ---------- */

const Frame = ({ top, bottom }) => (
  <>
    <rect x="36" y={top} width="366" height={bottom - top} fill={PEACH} />
    <rect x="1502" y={top} width="121" height={bottom - top} fill={PEACH} />
    <g stroke={LINE} strokeWidth="4">
      {[219, 678, 952, 1227].map(x => (
        <line key={x} x1={x} x2={x} y1={top} y2={bottom} />
      ))}
      <line x1="37" x2="37" y1={top - 9} y2={bottom} />
    </g>
  </>
)

const PriceChart = () => (
  <svg viewBox="36 30 1587 1266" preserveAspectRatio="none">
    <Frame top={39} bottom={1287} />
    <path
      d="M36 31H1623M36 351H1623M36 975H1623M36 1294H1623"
      stroke={LINE}
      strokeWidth="5"
    />
    <g stroke="#3cb43c" strokeOpacity="0.400" strokeWidth="5">
      {askDepth.map(([y, x]) => (
        <line key={y} x1={x + NOON} x2="1502" y1={y} y2={y} />
      ))}
      {range(45, 620, 6).map(y => (
        <line key={y} x1={1500 - noise(y) * 14} x2="1502" y1={y} y2={y} />
      ))}
    </g>
    <g stroke="#f42525" strokeOpacity="0.250" strokeWidth="5">
      {bidDepth.map(([y, x]) => (
        <line key={y} x1={x + NOON} x2="1502" y1={y} y2={y} />
      ))}
      {range(630, 1285, 6).map(y => (
        <line key={y} x1={1500 - noise(y) * 14} x2="1502" y1={y} y2={y} />
      ))}
    </g>
    <line
      x1="36"
      x2="1623"
      y1="664"
      y2="664"
      stroke="#666666"
      strokeWidth="6"
      strokeDasharray="36 17"
    />
    <polyline points={average} fill="none" stroke="#fdbb42" strokeWidth="6" />
    <g fill="none" stroke={BLUE} strokeLinejoin="round">
      <polyline points={preOpen} strokeWidth="10" />
      <polyline points={price} strokeWidth="6" />
      <line x1="1502" x2="1623" y1="622" y2="622" strokeWidth="10" />
    </g>
    <line
      x1="630"
      x2="630"
      y1="330"
      y2="520"
      stroke="#5e9dff"
      strokeWidth="6"
      strokeDasharray="13 10"
    />
    <circle cx="630" cy="325" r="13" fill="#5e9dff" />
  </svg>
)

const VolumeChart = () => (
  <svg viewBox="36 150 1587 412" preserveAspectRatio="none">
    <Frame top={159} bottom={560} />
    <path d="M36 151H1623M36 561H1623" stroke={LINE} strokeWidth="4" />
    {range(38, 392, 6).map(x => {
      const h = valueAt(preVolume, x + 3)
      const down = (x > 60 && x < 74) || x === 302
      return (
        <rect key={x} x={x} y={559 - h} width="6" height={h} fill={down ? GREEN : RED} />
      )
    })}
    <rect x="393" y="255" width="5" height="304" fill={RED} />
    <g fill={RED}>
      {range(38, 398, 6).map(x => (
        <rect key={x} x={x} y="152" width="6" height={2 + noise(x) * 8} />
      ))}
      <path d="M38 152h5v14h-5zM80 152h18v20h-5v-5h-6v-5h-7zM103 152h29v146q-20-2-29-7zM141 152h7v146h-7zM148 152h4v14h-4zM275 152h20v22h-10v-6h-10zM305 152h39v50h-6v-10h-8v-7h-10v-5h-15zM387 152h6v63h-6z" />
    </g>
    <path d="M60 152h16v6H60zM300 152h5v6h-5z" fill={GREEN} />
    {openVolume.map(([x, h, up]) => (
      <rect key={x} x={x - 2} y={559 - h} width="5" height={h} fill={up ? RED : GREEN} />
    ))}
    {range(679, 1488, 5).map(x => {
      const h = Math.max(3, valueAt(volumeCurve, x) * (0.6 + noise(x) * 0.5))
      return (
        <rect
          key={x}
          x={x - 2}
          y={559 - h}
          width="5"
          height={h}
          fill={noise(x + 7) > 0.48 ? RED : GREEN}
        />
      )
    })}
    <rect x="1498" y="477" width="5" height="82" fill={RED} />
    {range(1505, 1618, 6).map(x => {
      const h = valueAt(postVolume, x + 3)
      return (
        <rect
          key={x}
          x={x}
          y={559 - h}
          width="5"
          height={h}
          fill={x > 1540 && x < 1570 ? GREEN : RED}
        />
      )
    })}
    <path
      d="M1512 152h29v20h-4v6h-6v-3h-6v5h-7v-3h-6zM1578 152h43v28h-20v-3h-9v-4h-8v-8h-6z"
      fill={RED}
    />
    <path d="M1499 152h6v6h-6zM1548 152h25v5h-25z" fill={GREEN} />
  </svg>
)

const MacdChart = () => (
  <svg viewBox="36 676 1587 414" preserveAspectRatio="none">
    <Frame top={685} bottom={1088} />
    <path d="M36 678H1623M36 1088H1623" stroke="#d9dce2" strokeWidth="4" />
    <line x1="402" x2="1502" y1="942" y2="942" stroke={RED} strokeWidth="2" />
    {macdUp.map(points => (
      <polygon key={points} points={points} fill={RED} />
    ))}
    {macdDown.map(points => (
      <polygon key={points} points={points} fill={GREEN} />
    ))}
    <g fill="none" strokeLinejoin="round" strokeWidth="6">
      <polyline points={dif} stroke="#262626" />
      <polyline points={dea} stroke="#fdbb42" />
    </g>
  </svg>
)

const BookRows = ({ rows, buy }) => (
  <tbody>
    {rows.map(([name, value, size, bar, kind]) => (
      <BookRow key={name}>
        <th scope="row">
          {name[0]}
          <span>{name.slice(1)}</span>
        </th>
        <PriceCell>{value}</PriceCell>
        <SizeCell $buy={buy} $bar={bar}>
          {size}
        </SizeCell>
        <Dot $kind={kind} />
      </BookRow>
    ))}
  </tbody>
)

const App = () => (
  <>
    <GlobalStyle />
    <Screen>
      <StatusBar>
        <Cluster $gap={10}>
          <Clock>20:21</Clock>
          <BedIcon />
        </Cluster>
        <Cluster $gap={14}>
          <SignalIcon />
          <WifiIcon />
          <Battery>
            <span>52</span>
          </Battery>
        </Cluster>
      </StatusBar>

      <Header>
        <HeaderLeft $gap={15}>
          <button aria-label="返回">
            <BackIcon />
          </button>
          <AppLogo href="#home">
            东方
            <br />
            财富
          </AppLogo>
        </HeaderLeft>
        <HeaderTitle>
          <Title>
            北方长龙<Badge>企</Badge>
          </Title>
          <Code>
            <span>301357</span>
            <Tag>融</Tag>
            <Tag>注</Tag>
            <Tag>L2</Tag>
            <Caret $space={7} $color="#cccccc" />
          </Code>
        </HeaderTitle>
        <HeaderActions>
          <button aria-label="助手">
            <RobotIcon />
          </button>
          <button aria-label="分享">
            <ShareIcon />
          </button>
          <button aria-label="搜索">
            <SearchIcon />
          </button>
        </HeaderActions>
      </Header>

      <Quote>
        <div>
          <LastPrice>159.99</LastPrice>
          <Change>
            <span>1.32%</span>
            <span>2.09</span>
          </Change>
          <QuoteList>
            <QuoteRow>
              <dt>
                总值
                <MoreDots />
              </dt>
              <dd>
                152.3<Spaced>亿</Spaced>
              </dd>
            </QuoteRow>
          </QuoteList>
        </div>
        <QuoteList>
          <QuoteRow $color={RED}>
            <dt>今开</dt>
            <dd>163.00</dd>
          </QuoteRow>
          <QuoteRow>
            <dt>
              换手
              <MoreDots />
            </dt>
            <dd>71.09%</dd>
          </QuoteRow>
          <QuoteRow>
            <dt>流值</dt>
            <dd>
              38.08<Spaced>亿</Spaced>
            </dd>
          </QuoteRow>
        </QuoteList>
        <QuoteList>
          <QuoteRow $color={RED}>
            <dt>最高</dt>
            <dd>177.68</dd>
          </QuoteRow>
          <QuoteRow>
            <dt>总手</dt>
            <dd>
              16.92<Spaced>万</Spaced>
            </dd>
          </QuoteRow>
          <QuoteRow $small>
            <dt>
              市盈<sup>动</sup>
              <MoreDots />
            </dt>
            <dd>-750.98</dd>
          </QuoteRow>
        </QuoteList>
        <div>
          <QuoteList>
            <QuoteRow $color={GREEN}>
              <dt>最低</dt>
              <dd>145.00</dd>
            </QuoteRow>
            <QuoteRow>
              <dt>金额</dt>
              <dd>
                26.80<Spaced>亿</Spaced>
              </dd>
            </QuoteRow>
          </QuoteList>
          <MoreRow>
            <OutlineButton $height={39} $pad={14} $size={25}>
              更多
            </OutlineButton>
          </MoreRow>
        </div>
      </Quote>

      <AfterHours>
        盘后固定价格:<Figure $color={RED}>159.99</Figure>
        量:<Figure>28</Figure>
        额:
        <Figure $last>
          44.8<Spaced>万</Spaced>
        </Figure>
        <SwitchLabel>
          盘后分时
          <Switch type="checkbox" role="switch" />
        </SwitchLabel>
        <button aria-label="展开">
          <ChevronIcon />
        </button>
      </AfterHours>

      <News>
        <SpeakerIcon />
        <NewsText href="#news">
          龙虎榜：买入总额<span>2.671</span>亿元，卖出总额<span>2.895</span>
          亿...
        </NewsText>
        <RedDot />
        <button aria-label="关闭">
          <CloseIcon />
        </button>
      </News>

      <Tabs>
        <Tab $active>分时</Tab>
        <Tab>五日</Tab>
        <Tab>
          日<Spaced>K</Spaced>
        </Tab>
        <Tab>
          周<Spaced>K</Spaced>
        </Tab>
        <Tab>
          月<Spaced>K</Spaced>
        </Tab>
        <Tab>
          更多
          <Corner />
        </Tab>
        <Tab aria-label="设置">
          <GearIcon />
        </Tab>
      </Tabs>

      <Summary>
        <Average>均价：158.39</Average>
        <span>最新：159.99</span>
        <span>2.09</span>
        <span>1.32%</span>
        <HelpIcon />
        <OutlineButton $height={36} $pad={7} $size={22} $color="#555555">
          大单模式
        </OutlineButton>
      </Summary>

      <Workspace>
        <Charts>
          <Panel $height={422}>
            <Watermark>东方财富</Watermark>
            <PriceChart />
            <AxisLabel $top="1px" $left="0" $color={RED}>
              189.48
            </AxisLabel>
            <AxisLabel $top="1px" $right="0" $color={RED}>
              20.00%
            </AxisLabel>
            <AxisLabel $top="198px" $left="0">
              157.90
            </AxisLabel>
            <AxisLabel $bottom="2px" $left="0" $color={GREEN}>
              126.32
            </AxisLabel>
            <AxisLabel $bottom="2px" $right="0" $color={GREEN}>
              -20.00%
            </AxisLabel>
            <SellMark>S</SellMark>
          </Panel>

          <IndicatorBar>
            <SelectBox>
              <Select aria-label="副图指标一">
                <option>成交额</option>
              </Select>
            </SelectBox>
            <span>
              26.80<Spaced>亿</Spaced>
            </span>
          </IndicatorBar>
          <Panel $height={137}>
            <VolumeChart />
            <AxisLabel $top="2px" $left="23%">
              1.93<Spaced>亿</Spaced>
            </AxisLabel>
            <ExpandButton aria-label="全屏">
              <ExpandIcon />
            </ExpandButton>
          </Panel>

          <IndicatorBar>
            <SelectBox>
              <Select aria-label="副图指标二">
                <option>MACD</option>
              </Select>
            </SelectBox>
            <Reading $color="#444444">DIF:-1.021 ↓</Reading>
            <Reading $color="#fdbb42">DEA:-0.472 ↓</Reading>
            <Reading $color="#e22be2">M:-1.098 ↑</Reading>
          </IndicatorBar>
          <Panel $height={138}>
            <MacdChart />
            <AxisLabel $top="2px" $left="23%">
              5.865
            </AxisLabel>
            <AxisLabel $bottom="2px" $left="23%">
              -3.283
            </AxisLabel>
          </Panel>

          <TimeAxis>
            <span>09:15</span>
            <span>09:30</span>
            <span>15:00</span>
          </TimeAxis>
          <RangeBar>
            <RangeInput type="range" aria-label="开始时间" defaultValue={21} />
            <RangeInput type="range" aria-label="结束时间" defaultValue={96} />
          </RangeBar>
        </Charts>

        <Book>
          <BookTabs>
            <BookTab $active>千档</BookTab>
            <BookTab>大单</BookTab>
            <BookTab>分价</BookTab>
          </BookTabs>
          <DepthLink href="#depth">查看千档行情 &gt;</DepthLink>
          <BookTable $height={315} $rows={315}>
            <BookRows rows={sells} />
          </BookTable>
          <Balance />
          <BookTable $height={325} $rows={347}>
            <BookRows rows={buys} buy />
          </BookTable>
          <Trades>
            <caption>
              分时成交
              <Caret $up $size={6} />
            </caption>
            <tbody>
              <tr>
                <td>15:13</td>
                <td>159.99</td>
                <td>12</td>
              </tr>
              <tr>
                <td>15:30</td>
                <td>159.99</td>
                <td>1</td>
              </tr>
            </tbody>
          </Trades>
        </Book>
      </Workspace>

      <BestQuotes>
        <Side>
          <BestRow>
            <span>
              卖<Spaced>1</Spaced>
            </span>
            <span>160.00</span>
            <span>332</span>
          </BestRow>
          <QueueRow $color={GREEN}>
            <span>2</span>
            <span>1</span>
            <span>9</span>
            <span>3</span>
          </QueueRow>
        </Side>
        <Side $last>
          <BestRow>
            <span>
              买<Spaced>1</Spaced>
            </span>
            <span>159.99</span>
            <span>591</span>
          </BestRow>
          <QueueRow $color={RED}>
            <span>4</span>
            <span>1</span>
            <span>1</span>
            <span>2</span>
          </QueueRow>
        </Side>
      </BestQuotes>

      <BottomNav>
        <IndexItem href="#index">
          <Caret $up />
          <strong>3639.67</strong>
          <IndexChange>
            <IndexName>上证</IndexName>
            0.16%
          </IndexChange>
        </IndexItem>
        <NavItem href="#trade">
          <TradeIcon />
          交易
        </NavItem>
        <NavItem href="#post">
          <PostIcon />
          发帖
        </NavItem>
        <NavItem href="#tools">
          <GridIcon />
          功能
        </NavItem>
        <NavItem href="#watch">
          <WatchIcon />
          设自选
        </NavItem>
      </BottomNav>
      <HomeArea />
    </Screen>
  </>
)

export default App
